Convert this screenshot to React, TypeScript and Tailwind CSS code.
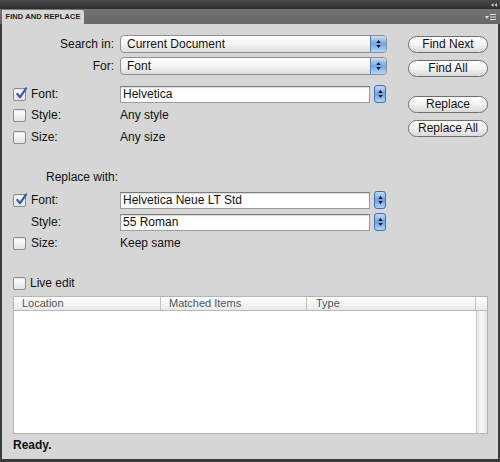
import React from 'react';

const font = { fontFamily: '"Liberation Sans", Arial, sans-serif' };

function Checkbox({ checked }: { checked?: boolean }) {
  return (
    <span className="relative flex h-[13px] w-[13px] shrink-0 items-center justify-center rounded-[2px] border border-[#8d8d8d] bg-gradient-to-b from-white to-[#e4e4e4] shadow-[inset_0_1px_1px_rgba(0,0,0,0.1)]">
      {checked && (
        <svg viewBox="0 0 14 14" className="absolute -top-[2px] left-[1px] h-[13px] w-[13px]">
          <path d="M2.5 7.5 L5.5 11 L12 1.5" fill="none" stroke="#2d5fb5" strokeWidth={2.4} strokeLinecap="round" strokeLinejoin="round" />
        </svg>
      )}
    </span>
  );
}

function Arrows() {
  return (
    <>
      <svg viewBox="0 0 6 4" className="h-[3px] w-[5px]"><path d="M3 0 L6 4 L0 4 Z" fill="#111" /></svg>
      <svg viewBox="0 0 6 4" className="h-[3px] w-[5px]"><path d="M0 0 L6 0 L3 4 Z" fill="#111" /></svg>
    </>
  );
}

function Stepper() {
  return (
    <span className="flex h-[18px] w-[12px] shrink-0 flex-col items-center justify-center gap-[2px] rounded-[3px] border border-[#3d6db3] bg-gradient-to-b from-[#c3dbf7] via-[#6aa3e6] to-[#b3d3f6]">
      <Arrows />
    </span>
  );
}

function Select({ value }: { value: string }) {
  return (
    <div className="flex h-[18px] w-[267px] items-stretch overflow-hidden rounded-[4px] border border-[#8e8e8e] bg-gradient-to-b from-white via-[#f4f4f4] to-[#dcdcdc]">
      <span className="flex-1 pl-[6px] text-[12px] leading-[16px] text-[#111]">{value}</span>
      <span className="flex w-[16px] flex-col items-center justify-center gap-[2px] border-l border-[#5b82bd] bg-gradient-to-b from-[#c9e0f9] via-[#6ea6e8] to-[#b6d5f7]">
        <Arrows />
      </span>
    </div>
  );
}

function TextInput({ value }: { value: string }) {
  return (
    <div className="flex items-center gap-[4px]">
      <div className="h-[17px] w-[250px] border border-[#9c9c9c] border-t-[#7d7d7d] bg-white pl-[2px] text-[12px] leading-[15px] text-[#111] shadow-[inset_0_1px_1px_rgba(0,0,0,0.15)]">
        {value}
      </div>
      <Stepper />
    </div>
  );
}

function PillButton({ label, className = '' }: { label: string; className?: string }) {
  return (
    <button className={`block h-[17px] w-[80px] rounded-full border border-[#6f6f6f] bg-gradient-to-b from-white via-[#f3f3f3] to-[#d9d9d9] text-[12px] leading-[15px] text-[#111] ${className}`}>
      {label}
    </button>
  );
}

function CheckRow({ checked, label, mt, children, box = true }: { checked?: boolean; label: string; mt: string; children: React.ReactNode; box?: boolean }) {
  return (
    <div className={`flex h-[18px] items-center ${mt}`}>
      <span className="flex w-[18px] items-center">{box && <Checkbox checked={checked} />}</span>
      <span className="w-[89px] text-[12px] text-[#111]">{label}</span>
      {children}
    </div>
  );
}

export default function App() {
  return (
    <div className="flex h-[462px] w-[500px] flex-col bg-[#3b3b3b]" style={font}>
      {/* Top strip */}
      <div className="flex h-[9px] items-center justify-end bg-gradient-to-b from-[#4a4a4a] to-[#2f2f2f] pr-[3px]">
        <svg viewBox="0 0 6 4" className="h-[4px] w-[6px]">
          <path d="M2.5 0 L0 2 L2.5 4 Z M6 0 L3.5 2 L6 4 Z" fill="#d0d0d0" />
        </svg>
      </div>
      {/* Tab bar */}
      <div className="flex h-[15px] items-end bg-gradient-to-b from-[#747474] to-[#666666] pl-[2px]">
        <div className="flex h-[14px] w-[82px] items-center justify-center rounded-tr-[2px] bg-[#d6d6d6] text-[7.5px] font-bold tracking-[0.1px] text-[#222]">
          FIND AND REPLACE
        </div>
        <div className="ml-auto mr-[4px] flex h-[14px] items-center gap-[1px]">
          <svg viewBox="0 0 4 3" className="h-[3px] w-[4px]"><path d="M0 0 L4 0 L2 3 Z" fill="#ddd" /></svg>
          <svg viewBox="0 0 6 6" className="h-[6px] w-[6px]"><path d="M0 0.5 H6 M0 3 H6 M0 5.5 H6" stroke="#ddd" strokeWidth={1} /></svg>
        </div>
      </div>
      {/* Body */}
      <div className="mx-[2px] mb-[3px] flex flex-1 flex-col bg-[#d6d6d6] pl-[11px] pr-[10px]">
        <div className="flex">
          <div className="flex w-[376px] flex-col pt-[11px]">
            <div className="flex h-[18px] items-center">
              <span className="w-[101px] text-right text-[12px] text-[#111]">Search in:</span>
              <span className="w-[6px]" />
              <Select value="Current Document" />
            </div>
            <div className="mt-[4px] flex h-[18px] items-center">
              <span className="w-[101px] text-right text-[12px] text-[#111]">For:</span>
              <span className="w-[6px]" />
              <Select value="Font" />
            </div>
            <CheckRow checked label="Font:" mt="mt-[10px]">
              <TextInput value="Helvetica" />
            </CheckRow>
            <CheckRow label="Style:" mt="mt-[3px]">
              <span className="text-[12px] text-[#111]">Any style</span>
            </CheckRow>
            <CheckRow label="Size:" mt="mt-[4px]">
              <span className="text-[12px] text-[#111]">Any size</span>
            </CheckRow>
            <div className="mt-[22px] flex h-[18px] items-center pl-[33px] text-[12px] text-[#111]">Replace with:</div>
            <CheckRow checked label="Font:" mt="mt-[5px]">
              <TextInput value="Helvetica Neue LT Std" />
            </CheckRow>
            <CheckRow label="Style:" mt="mt-[4px]" box={false}>
              <TextInput value="55 Roman" />
            </CheckRow>
            <CheckRow label="Size:" mt="mt-[3px]">
              <span className="text-[12px] text-[#111]">Keep same</span>
            </CheckRow>
          </div>
          <div className="ml-auto flex flex-col pt-[12px]">
            <PillButton label="Find Next" />
            <PillButton label="Find All" className="mt-[7px]" />
            <PillButton label="Replace" className="mt-[19px]" />
            <PillButton label="Replace All" className="mt-[7px]" />
          </div>
        </div>

        <div className="mt-[22px] flex h-[18px] items-center gap-[4px]">
          <Checkbox />
          <span className="text-[12px] text-[#111]">Live edit</span>
        </div>

        {/* Results table */}
        <div className="mt-[4px] flex h-[138px] flex-col border border-[#b5b5b5] bg-white">
          <div className="flex h-[14px] border-b border-[#b9b9b9] bg-gradient-to-b from-white to-[#e9e9e9] text-[11px] leading-[13px] text-[#555]">
            <span className="w-[147px] border-r border-[#c2c2c2] pl-[8px]">Location</span>
            <span className="w-[146px] border-r border-[#c2c2c2] pl-[8px]">Matched Items</span>
            <span className="flex-1 border-r border-[#c2c2c2] pl-[9px]">Type</span>
            <span className="w-[11px]" />
          </div>
          <div className="flex flex-1">
            <div className="flex-1" />
            <div className="w-[11px] border-l border-[#c8c8c8] bg-gradient-to-r from-[#e6e6e6] via-[#f7f7f7] to-[#e2e2e2]" />
          </div>
        </div>

        <div className="mt-[3px] text-[12px] font-bold leading-[16px] text-[#111]">Ready.</div>
      </div>
    </div>
  );
}
